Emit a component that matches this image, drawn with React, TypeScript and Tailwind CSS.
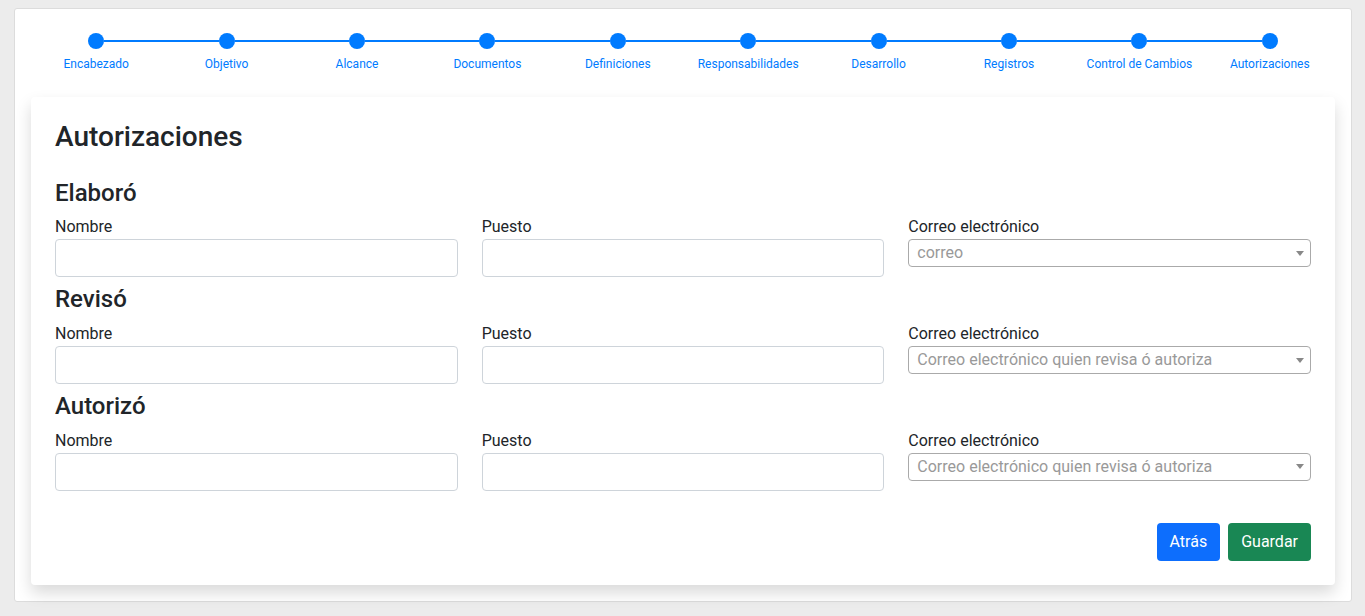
const STEPS = [
  "Encabezado",
  "Objetivo",
  "Alcance",
  "Documentos",
  "Definiciones",
  "Responsabilidades",
  "Desarrollo",
  "Registros",
  "Control de Cambios",
  "Autorizaciones",
];

const SECTIONS = [
  { title: "Elaboró", placeholder: "correo" },
  { title: "Revisó", placeholder: "Correo electrónico quien revisa ó autoriza" },
  { title: "Autorizó", placeholder: "Correo electrónico quien revisa ó autoriza" },
];

function Stepper() {
  return (
    <ol className="grid grid-cols-10">
      {STEPS.map((s, i) => (
        <li key={s} className="flex flex-col items-center">
          <div className="flex w-full items-center">
            <div className={`h-[2px] flex-1 ${i === 0 ? "" : "bg-[#007bff]"}`} />
            <div className="h-4 w-4 rounded-full bg-[#007bff]" />
            <div className={`h-[2px] flex-1 ${i === STEPS.length - 1 ? "" : "bg-[#007bff]"}`} />
          </div>
          <span className="mt-[6px] text-[12px] leading-[18px] text-[#007bff]">{s}</span>
        </li>
      ))}
    </ol>
  );
}

function SelectBox({ placeholder }: { placeholder: string }) {
  return (
    <div className="flex h-7 items-center justify-between rounded border border-[#aaaaaa] bg-white pl-2 pr-[6px]">
      <span className="truncate text-base leading-7 text-[#999999]">{placeholder}</span>
      <span className="h-0 w-0 border-x-4 border-t-[5px] border-x-transparent border-t-[#888888]" />
    </div>
  );
}

export default function App() {
  return (
    <div className="min-h-[616px] bg-[#ececec] pt-2 font-['Roboto',sans-serif] text-[#212529]">
      <div className="ml-[14px] mr-[13px] rounded-[3px] border border-[#dcdcdc] bg-white px-4 pt-6 pb-4">
        <Stepper />

        <div className="mt-[24px] rounded bg-white px-6 pt-[23px] pb-6 shadow-[0_0.5rem_1rem_rgba(0,0,0,0.15)]">
          <h3 className="mb-[25px] text-[28px] font-medium leading-[1.2]">Autorizaciones</h3>

          {SECTIONS.map((sec) => (
            <section key={sec.title} className="mb-2">
              <h4 className="mb-2 text-2xl font-medium leading-[1.2]">{sec.title}</h4>
              <div className="grid grid-cols-3 gap-6">
                <label className="flex flex-col">
                  <span className="text-base leading-6">Nombre</span>
                  <input className="h-[38px] rounded border border-[#ced4da] px-3" />
                </label>
                <label className="flex flex-col">
                  <span className="text-base leading-6">Puesto</span>
                  <input className="h-[38px] rounded border border-[#ced4da] px-3" />
                </label>
                <div className="flex flex-col">
                  <span className="text-base leading-6">Correo electrónico</span>
                  <SelectBox placeholder={sec.placeholder} />
                </div>
              </div>
            </section>
          ))}

          <div className="mt-8 flex justify-end gap-2">
            <button className="h-[38px] rounded bg-[#0d6efd] px-[13px] text-base text-white">Atrás</button>
            <button className="h-[38px] rounded bg-[#198754] px-[13px] text-base text-white">Guardar</button>
          </div>
        </div>
      </div>
    </div>
  );
}
